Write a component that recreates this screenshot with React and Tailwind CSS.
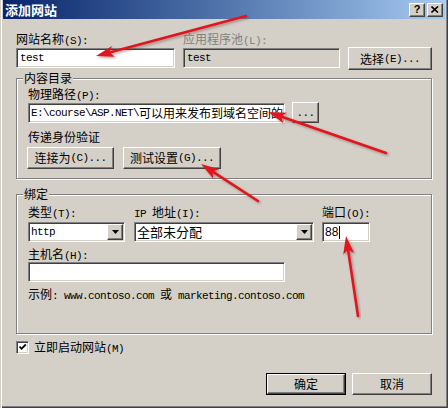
import React from "react";

const sunken =
  "border border-t-[#808080] border-l-[#808080] border-b-white border-r-white shadow-[inset_1px_1px_0_#404040,inset_-1px_-1px_0_#d4d0c8]";
const raised =
  "border border-t-white border-l-white border-b-[#404040] border-r-[#404040] shadow-[inset_-1px_-1px_0_#808080]";

function M({ children }) {
  return (
    <span className="font-['Liberation_Mono',monospace] text-[11px] tracking-[-0.6px]">
      {children}
    </span>
  );
}

function Arrow({ x1, y1, x2, y2 }) {
  const dx = x2 - x1;
  const dy = y2 - y1;
  const len = Math.sqrt(dx * dx + dy * dy);
  const ux = dx / len;
  const uy = dy / len;
  const hl = 18;
  const hw = 5.5;
  const bx = x2 - ux * hl;
  const by = y2 - uy * hl;
  const px = -uy;
  const py = ux;
  const pts = `${x2},${y2} ${bx + px * hw},${by + py * hw} ${bx + ux * 4},${by + uy * 4} ${bx - px * hw},${by - py * hw}`;
  return (
    <g filter="url(#sh)">
      <line x1={x1} y1={y1} x2={bx + ux * 5} y2={by + uy * 5} stroke="#e0141e" strokeWidth="2.6" strokeLinecap="round" />
      <polygon points={pts} fill="#e0141e" />
    </g>
  );
}

function Combo({ w, children }) {
  return (
    <div className={`${sunken} h-[20px] bg-white flex items-stretch`} style={{ width: w }}>
      <div className="flex-1 flex items-center pl-[2px] overflow-hidden whitespace-nowrap">{children}</div>
      <div className={`${raised} bg-[#d4d0c8] w-[16px] m-[1px] flex items-center justify-center`}>
        <svg width="7" height="4" viewBox="0 0 7 4">
          <polygon points="0,0 7,0 3.5,4" fill="#000" />
        </svg>
      </div>
    </div>
  );
}

export default function App() {
  return (
    <div className="relative w-[448px] h-[408px] bg-[#d4d0c8] overflow-hidden font-['Noto_Sans_CJK_SC',sans-serif] text-[12px] leading-[14px] text-black shadow-[inset_1px_0_0_#d4d0c8,inset_2px_0_0_#fff,inset_-1px_-1px_0_#404040,inset_-2px_-2px_0_#808080]">
      {/* Title bar */}
      <div className="mx-[3px] h-[19px] flex items-center bg-linear-to-r from-[#0a246a] to-[#a6caf0] pl-[2px] pr-[2px]">
        <span className="text-white font-bold text-[13px] leading-[16px]">添加网站</span>
        <div className="ml-auto flex gap-[2px]">
          <div className={`${raised} bg-[#d4d0c8] w-[16px] h-[14px] flex items-center justify-center`}>
            <span className="font-['Liberation_Sans',sans-serif] font-bold text-[11px] leading-[11px]">?</span>
          </div>
          <div className={`${raised} bg-[#d4d0c8] w-[16px] h-[14px] flex items-center justify-center`}>
            <svg width="8" height="7" viewBox="0 0 8 7">
              <path d="M0.5 0.5 L7 6.5 M7 0.5 L0.5 6.5" stroke="#000" strokeWidth="1.6" />
            </svg>
          </div>
        </div>
      </div>

      {/* Row 1 */}
      <div className="flex mt-[13px] ml-[16px]">
        <div className="w-[159px] flex flex-col">
          <div className="h-[14px] whitespace-nowrap">网站名称<M>(S):</M></div>
          <div className={`${sunken} mt-[2px] h-[20px] bg-white flex items-center pl-[3px]`}>
            <M>test</M>
          </div>
        </div>
        <div className="w-[157px] ml-[8px] flex flex-col">
          <div className="h-[14px] whitespace-nowrap text-[#808080]">应用程序池<M>(L):</M></div>
          <div className={`${sunken} mt-[2px] h-[20px] bg-[#d4d0c8] flex items-center pl-[3px]`}>
            <M>test</M>
          </div>
        </div>
        <div className="ml-[8px] pt-[15px]">
          <div className={`${raised} w-[84px] h-[23px] bg-[#d4d0c8] flex items-center justify-center whitespace-nowrap`}>
            选择<M>(E)...</M>
          </div>
        </div>
      </div>

      {/* Group 1 */}
      <fieldset className="mx-[16px] mt-[1px] border border-[#808080] shadow-[inset_1px_1px_0_#fff,1px_1px_0_#fff] pl-[11px] pr-[11px] pb-[9px]">
        <legend className="ml-[-5px] px-[1px] bg-[#d4d0c8] leading-[14px]">内容目录</legend>
        <div className="mt-[2px] h-[14px] whitespace-nowrap">物理路径<M>(P):</M></div>
        <div className="flex items-start mt-[1px]">
          <div className={`${sunken} mt-[1px] w-[257px] h-[20px] bg-white flex items-center pl-[2px] overflow-hidden whitespace-nowrap`}>
            <M>E:\course\ASP.NET\</M>可以用来发布到域名空间的
          </div>
          <div className={`${raised} ml-[7px] w-[27px] h-[21px] bg-[#d4d0c8] flex items-center justify-center`}>
            <M>...</M>
          </div>
        </div>
        <div className="mt-[7px] h-[14px]">传递身份验证</div>
        <div className="flex mt-[3px] -ml-[1px]">
          <div className={`${raised} w-[87px] h-[22px] bg-[#d4d0c8] flex items-center justify-center whitespace-nowrap`}>
            连接为<M>(C)...</M>
          </div>
          <div className={`${raised} ml-[9px] w-[98px] h-[22px] bg-[#d4d0c8] flex items-center justify-center whitespace-nowrap`}>
            测试设置<M>(G)...</M>
          </div>
        </div>
      </fieldset>

      {/* Group 2 */}
      <fieldset className="mx-[16px] mt-[8px] border border-[#808080] shadow-[inset_1px_1px_0_#fff,1px_1px_0_#fff] pl-[11px] pr-[11px] pb-[32px]">
        <legend className="ml-[-5px] px-[1px] bg-[#d4d0c8] leading-[14px]">绑定</legend>
        <div className="flex mt-[4px]">
          <div className="w-[97px] flex flex-col">
            <div className="h-[14px] whitespace-nowrap">类型<M>(T):</M></div>
            <div className="mt-[3px]">
              <Combo w={97}>
                <M>http</M>
              </Combo>
            </div>
          </div>
          <div className="w-[180px] ml-[9px] flex flex-col">
            <div className="h-[14px] whitespace-nowrap">
              <M>IP </M>地址<M>(I):</M>
            </div>
            <div className="mt-[3px]">
              <Combo w={180}>
                <span className="text-[13px]">全部未分配</span>
              </Combo>
            </div>
          </div>
          <div className="w-[48px] ml-[8px] flex flex-col">
            <div className="h-[14px] whitespace-nowrap">端口<M>(O):</M></div>
            <div className={`${sunken} mt-[3px] h-[20px] bg-white flex items-center pl-[2px]`}>
              <span className="font-['Liberation_Sans',sans-serif] text-[12px]">88</span>
              <span className="w-[1px] h-[13px] bg-black ml-[1px]"></span>
            </div>
          </div>
        </div>
        <div className="mt-[5px] h-[14px] whitespace-nowrap">主机名<M>(H):</M></div>
        <div className={`${sunken} mt-[1px] w-[257px] h-[20px] bg-white`}></div>
        <div className="mt-[5px] h-[14px] whitespace-nowrap">
          示例<M>: www.contoso.com </M>或<M> marketing.contoso.com</M>
        </div>
      </fieldset>

      {/* Checkbox */}
      <div className="flex items-center mt-[6px] ml-[16px]">
        <div className={`${sunken} w-[13px] h-[13px] bg-white flex items-center justify-center`}>
          <svg width="9" height="9" viewBox="0 0 9 9">
            <path d="M1.5 3.5 L3.5 5.8 L7.8 1.5" stroke="#000" strokeWidth="1.8" fill="none" />
          </svg>
        </div>
        <div className="ml-[5px] h-[14px] whitespace-nowrap">立即启动网站<M>(M)</M></div>
      </div>

      {/* Buttons */}
      <div className="flex justify-end gap-[6px] mt-[19px] pr-[16px]">
        <div className="w-[80px] h-[22px] border border-black">
          <div className={`${raised} w-full h-full bg-[#d4d0c8] flex items-center justify-center`}>确定</div>
        </div>
        <div className={`${raised} w-[80px] h-[22px] bg-[#d4d0c8] flex items-center justify-center`}>取消</div>
      </div>

      {/* Red annotation arrows */}
      <svg className="absolute inset-0 pointer-events-none" width="448" height="408" viewBox="0 0 448 408">
        <defs>
          <filter id="sh" x="-20%" y="-20%" width="140%" height="140%">
            <feDropShadow dx="1.5" dy="1.5" stdDeviation="1.2" floodColor="#603030" floodOpacity="0.45" />
          </filter>
        </defs>
        <Arrow x1={246} y1={16} x2={96} y2={56} />
        <Arrow x1={386} y1={153} x2={268} y2={112} />
        <Arrow x1={258} y1={201} x2={201} y2={164} />
        <Arrow x1={358} y1={316} x2={346} y2={236} />
      </svg>
    </div>
  );
}
